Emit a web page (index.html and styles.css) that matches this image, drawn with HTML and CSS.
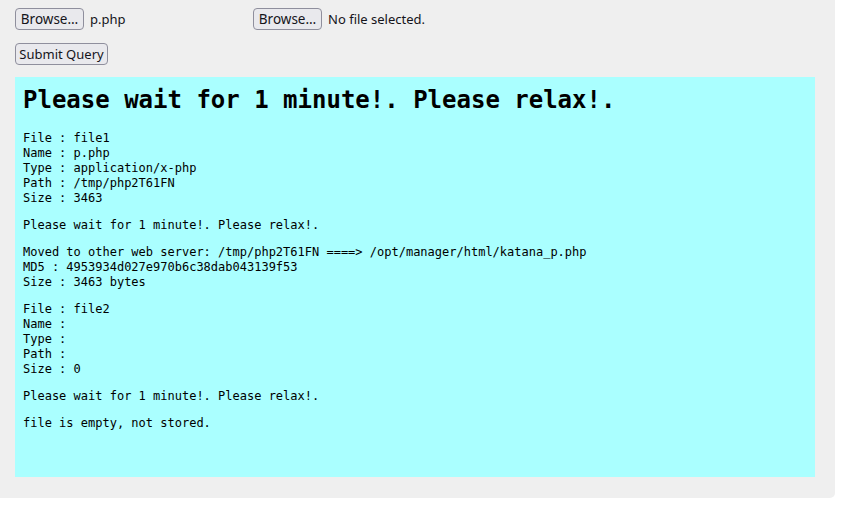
FILE: index.html
```html
<!DOCTYPE html>
<html>
<head>
<meta charset="utf-8">
<link rel="stylesheet" href="styles.css">
</head>
<body>
<div class="frame">
  <form class="upload">
    <div class="files">
      <div class="file-field"><span class="btn browse">Browse…</span><span class="fname">p.php</span></div>
      <div class="file-field"><span class="btn browse">Browse…</span><span class="fname">No file selected.</span></div>
    </div>
    <div class="submit-row"><span class="btn submit">Submit Query</span></div>
  </form>
  <div class="result">
    <h1 class="title">Please wait for 1 minute!. Please relax!.</h1>
    <pre class="para">File : file1
Name : p.php
Type : application/x-php
Path : /tmp/php2T61FN
Size : 3463</pre>
    <pre class="para">Please wait for 1 minute!. Please relax!.</pre>
    <pre class="para">Moved to other web server: /tmp/php2T61FN ====&gt; /opt/manager/html/katana_p.php
MD5 : 4953934d027e970b6c38dab043139f53
Size : 3463 bytes</pre>
    <pre class="para">File : file2
Name : 
Type : 
Path : 
Size : 0</pre>
    <pre class="para">Please wait for 1 minute!. Please relax!.</pre>
    <pre class="para">file is empty, not stored.</pre>
  </div>
</div>
</body>
</html>
```
FILE: styles.css
```css
html, body {
  margin: 0;
  padding: 0;
  background: #ffffff;
}
.frame {
  width: 835px;
  height: 498px;
  box-sizing: border-box;
  background: #efefef;
  border-bottom-right-radius: 5px;
  padding: 8px 15px 0 15px;
}
.upload {
  margin: 0;
}
.files {
  display: flex;
  align-items: center;
}
.file-field {
  display: flex;
  align-items: center;
  gap: 6px;
  width: 238px;
}
.btn {
  display: inline-flex;
  align-items: center;
  justify-content: center;
  box-sizing: border-box;
  height: 22px;
  padding: 0;
  border: 1px solid #8f8f9d;
  border-radius: 4px;
  background: #e9e9ed;
  color: #15141a;
  font-family: "Noto Sans", "Open Sans", sans-serif;
  font-size: 13.5px;
  white-space: nowrap;
}
.btn.browse {
  width: 69px;
}
.btn.submit {
  width: 93px;
  font-size: 13px;
}
.fname {
  font-family: "Noto Sans", "Open Sans", sans-serif;
  font-size: 13px;
  color: #15141a;
}
.submit-row {
  margin-top: 13px;
  display: flex;
}
.result {
  margin-top: 12px;
  width: 800px;
  height: 400px;
  box-sizing: border-box;
  background: #aaffff;
  padding: 9px 8px 0 8px;
  color: #000;
}
.title {
  margin: 0 0 17px 0;
  font-family: "DejaVu Sans Mono", monospace;
  font-size: 24px;
  line-height: 28px;
  font-weight: bold;
}
.para {
  margin: 0 0 12px 0;
  font-family: "DejaVu Sans Mono", monospace;
  font-size: 12px;
  line-height: 15px;
}
```
